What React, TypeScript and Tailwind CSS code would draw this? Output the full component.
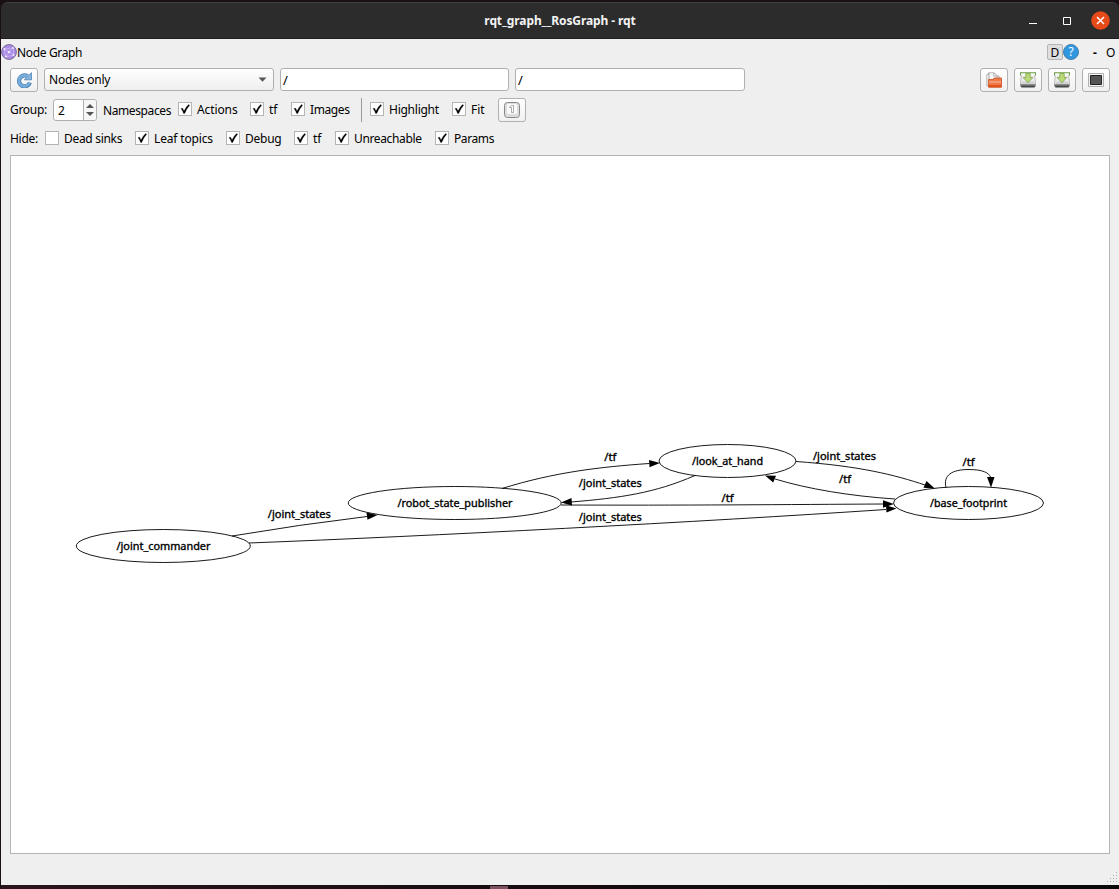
import React from "react";

function Tick() {
  return (
    <svg className="block h-full w-full" viewBox="0 0 12 12">
      <path d="M2 5.6 L3.6 5.2 L5 8 Q7 4 9.6 1.6 L10.6 2.2 Q7.6 5.6 5.7 10.4 L4.6 10.4 Q3.6 7.6 2 5.6Z" fill="#000" stroke="#000" strokeWidth="0.3" />
    </svg>
  );
}

function Check({ label, checked = true, className = "" }: { label: string; checked?: boolean; className?: string }) {
  return (
    <div className={"flex h-[14px] shrink-0 items-center whitespace-nowrap " + className}>
      <span className="mr-[5px] h-[14px] w-[14px] shrink-0 border border-[#b4b4b4] bg-white">{checked && <Tick />}</span>
      <span className="pt-[2px]">{label}</span>
    </div>
  );
}

function ToolButton({ children }: { children: React.ReactNode }) {
  return (
    <button className="flex h-[24px] w-[28px] shrink-0 items-center justify-center rounded-[3px] border border-[#b0b0b0] bg-gradient-to-b from-white to-[#f0f0f0]">
      {children}
    </button>
  );
}

function SaveIcon() {
  return (
    <svg width="16" height="16" viewBox="0 0 16 16">
      <path d="M1.500 2h13l1 9.500v2H.5v-2z" fill="#ececec" stroke="#a3a3a3" strokeWidth=".7" />
      <path d="M2 9.500h12l1 2.500H1z" fill="#d2d2d2" />
      <path d="M.5 12.300h15v1.800q0 1.400-1.200 1.400H1.700Q.5 15.500.5 14.100z" fill="#6b6d6c" />
      <path d="M1.500 14.700h13" stroke="#3f4040" />
      <path d="M1 .7h14v2.600H1z" fill="#fafcf7" />
      <path d="M.5 3.500V.7h15v2.800" fill="none" stroke="#6b9c44" strokeWidth="1.100" />
      <path d="M5.800 1.500h4.400v4h2.600L8 10.800 3.200 5.500h2.600z" fill="#bada78" stroke="#7da14a" strokeWidth=".8" />
    </svg>
  );
}

const labels: [string, number, number, number][] = [
  ["/joint_commander", 163.5, 549.5, 94],
  ["/robot_state_publisher", 455, 507, 115],
  ["/look_at_hand", 727.5, 464.5, 71],
  ["/base_footprint", 968.5, 507, 77],
  ["/joint_states", 299.3, 517.5, 63],
  ["/tf", 610.3, 460.5, 12],
  ["/joint_states", 610.3, 486.5, 63],
  ["/joint_states", 610.3, 520.5, 63],
  ["/tf", 727.5, 501.5, 12],
  ["/joint_states", 844.5, 459.5, 63],
  ["/tf", 845, 483, 12],
  ["/tf", 968.5, 466, 12],
];

function Graph() {
  return (
    <svg className="block" width="1098" height="697" viewBox="11 156 1098 697">
      <g fill="none" stroke="#000" strokeWidth="0.9">
        <ellipse cx="163.3" cy="546" rx="87" ry="16.5" />
        <ellipse cx="454.7" cy="503" rx="106.5" ry="16.5" />
        <ellipse cx="727.5" cy="461" rx="68.5" ry="16.5" />
        <ellipse cx="968.5" cy="503" rx="75" ry="16.5" />
        <path d="M232 536Q300 524.5 367 516.500" />
        <path d="M249 543C430 536 700 522 886 509.500" />
        <path d="M502 488.500C555 472 600 467 649 463.500" />
        <path d="M695 475.500C655 493 620 498 571 502" />
        <path d="M561 505C680 505.500 790 504.500 884 504" />
        <path d="M796 461.500C860 466 895 475 925 485" />
        <path d="M895 499C850 496 808 489 775 479" />
        <path d="M946 487.500C943 475 952 469.500 969 469.500C983 469.500 989 473 990.500 477" />
      </g>
      <g fill="#000">
        <path d="M377.500 515L366.500 512.500l1 7.300z" />
        <path d="M896.500 508.500L886 505.300l.5 7.200z" />
        <path d="M660 463l-11-3 .5 7.200z" />
        <path d="M561 502.500l10.500-4.500 .5 7.500z" />
        <path d="M894 504l-11-3.700v7.400z" />
        <path d="M934.800 488.500l-8.300-7.500-3 6.800z" />
        <path d="M765 475.500l11 .3-2.800 6.800z" />
        <path d="M991 487.800l-4-10.800h7.500z" />
      </g>
      <g fill="#000" stroke="#000" strokeWidth="0.35" fontFamily="'Noto Sans', sans-serif" fontSize="10.7" textAnchor="middle">
        {labels.map(([text, x, y, w], i) => (
          <text key={i} x={x} y={y} textLength={w} lengthAdjust="spacingAndGlyphs">{text}</text>
        ))}
      </g>
    </svg>
  );
}

export default function App() {
  return (
    <div className="flex h-[889px] w-[1119px] flex-col overflow-hidden bg-[#191116] pl-px pt-[2px] font-['Noto_Sans',sans-serif] text-[12px] leading-[16px] text-black">
      <header className="flex h-[37px] shrink-0 items-center rounded-t-[7px] border-b border-t border-b-[#211c1f] border-t-[#414141] bg-[#2c2c2c] pr-[8px]">
        <div className="w-[90px]" />
        <h1 className="flex-1 text-center text-[12px] font-bold tracking-[-0.1px] text-[#f3f3f3]">rqt_graph__RosGraph - rqt</h1>
        <div className="flex w-[82px] shrink-0 items-center">
          <svg width="8" height="8" viewBox="0 0 8 8"><path d="M0 6.500h8" stroke="#fff" /></svg>
          <svg className="ml-[26px]" width="8" height="8" viewBox="0 0 8 8"><path d="M.5.5h7v7h-7z" fill="none" stroke="#fff" /></svg>
          <svg className="ml-auto mr-px" width="19" height="19" viewBox="0 0 19 19"><circle cx="9.500" cy="9.500" r="9.300" fill="#e64a19" /><path d="M6 6l7 7M13 6l-7 7" stroke="#fff" strokeWidth="1.500" /></svg>
        </div>
      </header>
      <main className="flex h-[846px] flex-col bg-[#efefef]">
        <div className="flex h-[26px] shrink-0 items-center">
          <svg className="shrink-0" width="16" height="16" viewBox="0 0 16 16">
            <circle cx="8" cy="8" r="7.400" fill="#a98be6" stroke="#766a96" />
            <path d="M3 5l5 3 4-4M8 8l-3 5M8 8l5 3M3 5l2 8 8-2-1-7z" fill="none" stroke="#c8b6ef" strokeWidth=".8" />
            <g fill="#eee6ff"><circle cx="3.500" cy="5" r="1" /><circle cx="8" cy="8" r="1.300" /><circle cx="12" cy="4" r="1" /><circle cx="5" cy="12.500" r="1" /><circle cx="12.500" cy="11" r="1" /></g>
          </svg>
          <span className="flex-1 pt-[2px] tracking-[-0.35px]">Node Graph</span>
          <span className="flex h-[16px] w-[16px] items-center justify-center rounded-[2px] border border-[#b5b5b5] bg-[#dedede] pt-px">D</span>
          <svg width="16" height="16" viewBox="0 0 16 16"><circle cx="8" cy="8" r="7.500" fill="#2f98e0" stroke="#477fa8" /><text x="8" y="12.300" textAnchor="middle" fontSize="12" fill="#fff" fontFamily="Noto Sans">?</text></svg>
          <span className="ml-[14px] w-[13px] pt-[2px] font-bold">-</span>
          <span className="w-[13px] pt-[2px]">O</span>
        </div>
        <div className="flex h-[29px] shrink-0 items-start pl-[9px] pr-[9px] pt-[3px]">
          <ToolButton>
            <svg className="-ml-px" width="16" height="16" viewBox="0 0 16 16">
              <path d="M13.800 10.600A5.500 5.500 0 1 1 11.500 4.300" fill="none" stroke="#4a7fb2" strokeWidth="4.200" />
              <path d="M15.600.6v7.200H8.400l2.400-2.400z" fill="#86b6df" stroke="#4a7fb2" strokeWidth=".8" />
              <path d="M13.500 10.400A5.400 5.400 0 1 1 11.500 4.500l1-.8" fill="none" stroke="#78addb" strokeWidth="2.800" />
            </svg>
          </ToolButton>
          <div className="ml-[6px] flex h-[23px] w-[230px] shrink-0 items-center justify-between rounded-[3px] border border-[#b0b0b0] bg-gradient-to-b from-white to-[#eee] pl-[4px] pr-[6px] tracking-[-0.2px]">
            Nodes only
            <svg width="9" height="5" viewBox="0 0 9 5"><path d="M.5.5h8L4.500 4.700z" fill="#555" /></svg>
          </div>
          <div className="ml-[6px] flex h-[23px] w-[229px] shrink-0 items-center rounded-[3px] border border-[#b0b0b0] bg-white pl-[2px] text-[13px]">/</div>
          <div className="ml-[6px] flex h-[23px] w-[230px] shrink-0 items-center rounded-[3px] border border-[#b0b0b0] bg-white pl-[2px] text-[13px]">/</div>
          <div className="ml-auto flex gap-[6px]">
            <ToolButton>
              <svg width="16" height="16" viewBox="0 0 16 16">
                <path d="M.8 13.500V2.500H2.500V.8h5.700l2.800 2.700V13.500z" fill="#f7f7f7" stroke="#a3a3a3" strokeWidth=".8" />
                <path d="M3 12V1M7.800 1v3h3M13 7V4h-2" fill="none" stroke="#999" strokeWidth=".8" />
                <path d="M2.500 7.500h4.700l.8-1.500h7.500v9.300h-13z" fill="#ee7a4a" stroke="#c9501f" strokeWidth=".8" />
                <path d="M3 9h12v2H3z" fill="#f39a74" />
                <path d="M3 13h12v2H3z" fill="#e4531b" />
              </svg>
            </ToolButton>
            <ToolButton><SaveIcon /></ToolButton>
            <ToolButton><SaveIcon /></ToolButton>
            <ToolButton>
              <svg width="16" height="14" viewBox="0 0 16 14"><path d="M.5.5h15v13H.5z" fill="#f2f2f2" stroke="#b0b0b0" /><path d="M2.500 2.500h11v9h-11z" fill="#555" stroke="#222" /></svg>
            </ToolButton>
          </div>
        </div>
        <div className="flex h-[31px] shrink-0 items-center pl-[9px]">
          <span className="mt-px w-[43px] tracking-[-0.3px]">Group:</span>
          <div className="flex h-[22px] w-[44px] overflow-hidden rounded-[3px] border border-[#b0b0b0] bg-white">
            <span className="w-[29px] pl-[4px] pt-[3px]">2</span>
            <span className="flex flex-1 flex-col items-center justify-center gap-[4px] border-l border-[#b0b0b0] bg-[#f7f7f7]">
              <svg width="8" height="4" viewBox="0 0 8 4"><path d="M0 4L4 0l4 4z" fill="#555" /></svg>
              <svg width="8" height="4" viewBox="0 0 8 4"><path d="M0 0l4 4 4-4z" fill="#555" /></svg>
            </span>
          </div>
          <span className="ml-[6px] mt-[2px] w-[75px] tracking-[-0.4px]">Namespaces</span>
          <Check label="Actions" className="-mt-px w-[72px] tracking-[-0.1px]" />
          <Check label="tf" className="-mt-px w-[41px]" />
          <Check label="Images" className="-mt-px w-[70px] tracking-[-0.4px]" />
          <span className="mr-[8px] h-[24px] w-px bg-[#999]" />
          <Check label="Highlight" className="-mt-px w-[82px] tracking-[-0.25px]" />
          <Check label="Fit" className="-mt-px w-[46px]" />
          <ToolButton>
            <svg width="16" height="16" viewBox="0 0 16 16"><rect x=".5" y=".5" width="15" height="15" rx="3" fill="#ddd" stroke="#888" /><rect x="2.500" y="1.500" width="11" height="11" rx="2" fill="#fafafa" stroke="#ccc" strokeWidth=".5" /><path d="M5.500 5L7.500 3.500h2v7h-2v-5h-2z" fill="#fff" stroke="#888" strokeWidth=".7" /></svg>
          </ToolButton>
        </div>
        <div className="flex h-[30px] shrink-0 items-start pl-[9px] pt-[6px]">
          <span className="w-[35px] tracking-[-0.3px]">Hide:</span>
          <Check label="Dead sinks" checked={false} className="w-[90px] tracking-[-0.3px]" />
          <Check label="Leaf topics" className="w-[91px] tracking-[-0.15px]" />
          <Check label="Debug" className="w-[68px] tracking-[-0.25px]" />
          <Check label="tf" className="w-[41px]" />
          <Check label="Unreachable" className="w-[100px] tracking-[-0.36px]" />
          <Check label="Params" className="tracking-[-0.4px]" />
        </div>
        <div className="ml-[9px] h-[699px] w-[1100px] shrink-0 border border-[#b4b4b4] bg-white"><Graph /></div>
        <div className="flex flex-1 items-end justify-end pb-[2px] pr-[2px]">
          <svg width="10" height="11" viewBox="0 0 10 11" fill="#b0b0b0"><path d="M9 0h1v1H9zM6 3h1v1H6zM9 3h1v1H9zM3 6h1v1H3zM6 6h1v1H6zM9 6h1v1H9zM0 9h1v1H0zM3 9h1v1H3zM6 9h1v1H6zM9 9h1v1H9z" /></svg>
        </div>
      </main>
      <div className="flex h-[4px] shrink-0 items-end bg-gradient-to-r from-[#2b151d] via-[#150b10] to-[#090808]"><span className="ml-[489px] h-[3px] w-[18px] bg-[#7d5060]" /></div>
    </div>
  );
}
